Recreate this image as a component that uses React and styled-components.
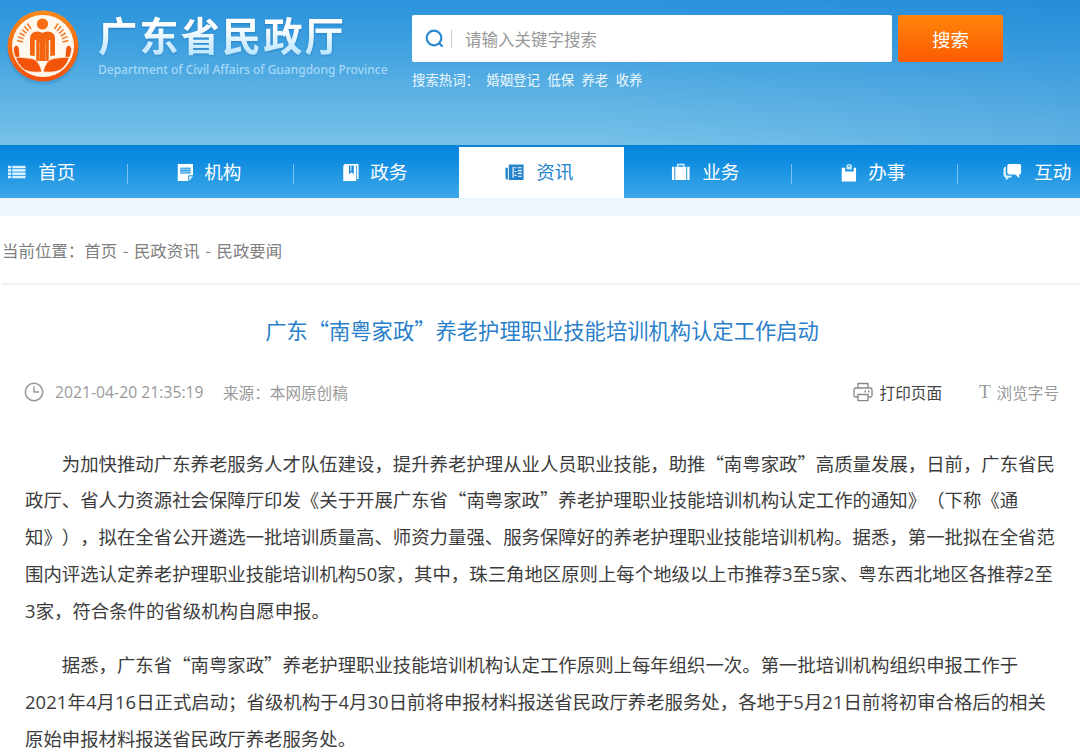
import React from 'react';
import styled, { createGlobalStyle, css } from 'styled-components';

const GlobalStyle = createGlobalStyle`
  * { box-sizing: border-box; }
  html, body { margin: 0; padding: 0; }
  body {
    width: 1080px;
    height: 753px;
    overflow: hidden;
    background: #fff;
    font-family: "Noto Sans CJK SC", sans-serif;
    text-spacing-trim: space-all;
    font-kerning: none;
  }
`;

const Page = styled.div`
  width: 1080px;
  height: 753px;
  overflow: hidden;
`;

const Header = styled.header`
  display: flex;
  height: 145px;
  background:
    linear-gradient(90deg, rgba(16, 120, 208, 0) 55%, rgba(16, 120, 208, 0.22) 100%),
    linear-gradient(180deg, #2b93dc 0%, #3c9fdf 28%, #5fb3e4 68%, #77c2e9 100%);
`;

const Brand = styled.div`
  display: flex;
  width: 412px;
  padding: 7px 0 0 4px;
`;

const Emblem = styled.svg`
  width: 78px;
  height: 80px;
  flex: none;
`;

const BrandText = styled.div`
  margin-left: 16px;
  padding-top: 1px;
  white-space: nowrap;
`;

const BrandName = styled.h1`
  margin: 0;
  height: 52px;
  font-size: 39.4px;
  letter-spacing: 1.9px;
  line-height: 52px;
  font-weight: 700;
  color: transparent;
  background: linear-gradient(180deg, #fff 35%, #b4e4ff 95%);
  background-clip: text;
  -webkit-background-clip: text;
  filter: drop-shadow(0 1px 1px rgba(20, 90, 160, 0.4));
`;

const BrandSub = styled.div`
  margin-top: 2px;
  font: 500 12px/16px "Noto Sans", sans-serif;
  letter-spacing: -0.01px;
  color: #a5d8f8;
`;

const SearchArea = styled.div`
  padding-top: 15px;
`;

const SearchRow = styled.div`
  display: flex;
  gap: 6px;
`;

const SearchBox = styled.div`
  display: flex;
  align-items: center;
  width: 480px;
  height: 47px;
  padding-left: 13px;
  border-radius: 2px;
  background: #fff;
`;

const SearchIcon = styled.svg`
  width: 19px;
  height: 19px;
`;

const Caret = styled.span`
  width: 1px;
  height: 18px;
  margin: 0 13px 0 7px;
  background: #c9c9c9;
`;

const Placeholder = styled.span`
  font-size: 16.5px;
  line-height: 24px;
  color: #999;
`;

const SearchButton = styled.button`
  width: 105px;
  height: 47px;
  padding: 0;
  border: 0;
  border-radius: 2px;
  background: linear-gradient(180deg, #ff850b, #fd5a02);
  color: #fff;
  font-family: inherit;
  font-size: 18.5px;
`;

const HotWords = styled.div`
  display: flex;
  gap: 7.4px;
  margin-top: 7px;
  font-size: 13.4px;
  line-height: 20px;
  color: #eef8ff;
`;

const Nav = styled.nav`
  display: flex;
  height: 53px;
  padding-top: 2px;
  overflow: hidden;
  background: linear-gradient(180deg, #0a80d2 0, #0788df 3px, #0f8ce0 30%, #3ea8e8 100%);
`;

const NavItem = styled.a`
  display: flex;
  flex: none;
  align-items: center;
  width: 166px;
  height: 51px;
  padding: 0 0 3px 46px;
  color: #fff;
  &:first-child { margin-left: -39px; }
  ${(p) => p.$active && css`
    width: 165px;
    margin-right: 1px;
    background: #fff;
    color: #2583cc;
  `}
`;

const NavIcon = styled.svg`
  width: 20px;
  height: 20px;
  margin-top: 2px;
  flex: none;
`;

const NavLabel = styled.span`
  margin-left: 11.2px;
  font-size: 18.6px;
  line-height: 26px;
  white-space: nowrap;
`;

const NavDivider = styled.span`
  width: 1px;
  height: 20px;
  margin: 6px -1px 0 auto;
  background: rgba(180, 225, 255, ${(p) => (p.$hidden ? 0 : 0.6)});
`;

const PaleStrip = styled.div`
  height: 18px;
  background: #eef6fd;
`;

const Breadcrumb = styled.div`
  display: flex;
  height: 69px;
  margin-left: 2px;
  border-bottom: 2px solid #f2f2f2;
  align-items: center;
  font-size: 16.45px;
  color: #808080;
`;

const Separator = styled.span`
  width: 16.8px;
  text-align: center;
`;

const Title = styled.h2`
  margin: 28px 0 0;
  padding-left: 4px;
  font-size: 21.3px;
  line-height: 34px;
  font-weight: 400;
  text-align: center;
  color: #2a7fca;
`;

const Meta = styled.div`
  display: flex;
  align-items: center;
  height: 30px;
  margin-top: 30px;
  padding: 0 21px 0 24px;
  font-size: 15.6px;
  color: #999;
`;

const MetaIcon = styled.svg`
  width: ${(p) => p.$size}px;
  height: ${(p) => p.$size}px;
  flex: none;
`;

const Time = styled.span`
  width: 168px;
  margin-left: 11px;
  font-family: "Open Sans", "Noto Sans", sans-serif;
  font-size: 15.7px;
  letter-spacing: 0.03px;
  white-space: nowrap;
`;

const Print = styled.span`
  display: flex;
  align-items: center;
  gap: 7px;
  margin-left: auto;
  color: #444;
`;

const FontSize = styled.span`
  display: flex;
  align-items: center;
  gap: 6px;
  margin-left: 37px;
`;

const SerifT = styled.span`
  font-family: "Liberation Serif", serif;
  font-size: 19px;
`;

const Article = styled.article`
  padding: 37.6px 0 0 25px;
  font-size: 18.4px;
  line-height: 36.8px;
  color: #3c3c3c;
`;

const Paragraph = styled.p`
  margin: 0 0 17.6px;
  text-indent: 2em;
`;

const Line = styled.span`
  display: block;
  height: 36.8px;
  white-space: nowrap;
  & + & { text-indent: 0; }
`;

const Num = styled.span`
  font-family: "Open Sans", "Noto Sans", sans-serif;
  line-height: 1;
  letter-spacing: 0.1px;
`;

const icons = {
  list: (
    <g fill="#d9f2ff">
      {[4, 7.5, 11, 14.5].map((y) => (
        <g key={y}>
          <rect x="0.5" y={y} width="3.5" height="2.6" />
          <rect x="5" y={y} width="14" height="2.6" />
        </g>
      ))}
    </g>
  ),
  note: (
    <g transform="translate(3 0)">
      <path fill="#fff" d="M1.5 2h16v12h-5v6h-11z" />
      <path fill="#d9f0ff" d="M13.5 15h4l-4 5z" />
      <path fill="#8fcbf3" d="M4 6h11v6H4z" />
      <path stroke="#2b98e3" strokeWidth="1" d="M4 6.5h11M4 9h11M4 11.5h11" />
    </g>
  ),
  book: (
    <g transform="translate(2.5 0)">
      <path fill="#fff" d="M3 2h14.5v16H16V4H4v1h11v15H1.5V4z" />
      <path fill="#fff" d="M2 4h13v16H2z" />
      <path fill="#168ce0" d="M7.5 4h5v9L10 10.500 7.5 13z" />
      <path fill="#fff" d="M9 4h1v5L9 10z" />
    </g>
  ),
  news: (
    <g>
      <path fill="#2583cc" d="M0 6h2.5v12.5H1L0 17zM3.500 2.500H19V19H3.500z" />
      <path stroke="#fff" strokeWidth="1.2" d="M8 5v11.500M9.500 6h2M13 6h4M13 9h4M13 12h4M13 15h4M9.500 10h2M9.500 14h2" />
    </g>
  ),
  bag: (
    <g fill="#fff">
      <path d="M0.500 5H3v14H0.500zM4 5h11.500v14H4zM16.500 5H19v14h-2.500z" />
      <path fill="none" stroke="#d9f0ff" strokeWidth="1.500" d="M6.500 5V2.700h6.500V5" />
    </g>
  ),
  clipboard: (
    <g transform="translate(2.500 0)">
      <path fill="#fff" d="M2 6h3.500v4h9V6h2.500v14.500H2z" />
      <path fill="#c6e8ff" d="M7 8V3.500a3 2.500 0 0 1 5.500 0V8z" />
      <circle cx="9.700" cy="4" r="0.900" fill="#2b98e3" />
    </g>
  ),
  chat: (
    <g fill="#fff" transform="translate(-1 0)">
      <path d="M7 2h10.500q2 0 2 2v7q0 2-2 2v4l-4-4H7q-2 0-2-2V4q0-2 2-2z" />
      <path fill="#d9f2ff" d="M3.500 5v7q0 2.500 2.500 2.500h5L8 16.500H6.500L3.500 19.500v-3Q1 16 1 14V8q0-3 2.500-3z" />
    </g>
  ),
};

const navItems = [
  { label: '首页', icon: 'list' },
  { label: '机构', icon: 'note' },
  { label: '政务', icon: 'book', plain: true },
  { label: '资讯', icon: 'news', active: true },
  { label: '业务', icon: 'bag' },
  { label: '办事', icon: 'clipboard' },
  { label: '互动', icon: 'chat', plain: true },
];

const rays = [
  [13, 33.5], [14, 29.6], [15.8, 26], [18, 22.5], [20.5, 19.300], [23.5, 16.500],
];

function Hand() {
  return (
    <>
      <path d="M9.500 43q-.2-4.500 3-4.500 2.500 0 2.700 3.500l.8 8.500h-4.500q-1.800-3-2-7.500z" />
      <path d="M11.500 50.500q4-.6 8 0l7 .8q5 .5 7.500 4.200 3 4 4 9.500-15 1.500-20.500-4.500-4-4-6-10z" />
    </>
  );
}

function Logo() {
  return (
    <Emblem viewBox="0 0 78 80">
      <defs>
        <linearGradient id="orange" x1="0" y1="0" x2="0" y2="1">
          <stop offset="0" stopColor="#f98a1c" />
          <stop offset="1" stopColor="#f4500a" />
        </linearGradient>
      </defs>
      <ellipse cx="39" cy="42" rx="36" ry="36" fill="#1d6dac" opacity="0.22" />
      <circle cx="39" cy="39" r="35.500" fill="url(#orange)" />
      <circle cx="39" cy="39" r="31" fill="#fff8ee" />
      <circle cx="38.500" cy="17" r="5.600" fill="#f56c12" />
      <path fill="#f5640f" d="M26 48.500V32q0-7.500 7.500-7.500 3 0 5 1.500 2-1.500 5-1.500 7.500 0 7.500 7.500v16.500q-3.500 0-5 .8V54H31v-4.700q-1.500-.8-5-.8z" />
      <path d="M31.500 54V33M45.500 54V33" stroke="#fff3e4" strokeWidth="1.500" />
      <path d="M35.500 54V35M41.500 54V35" stroke="#f9a066" strokeWidth="0.700" />
      <g fill="#f4540a" stroke="#fff8ee" strokeWidth="0.800">
        <Hand />
        <g transform="translate(77 0) scale(-1 1)"><Hand /></g>
      </g>
      <g stroke="#f47a20" strokeWidth="1.500">
        {rays.map(([x, y], i) => (
          <g key={x}>
            <path d={`M${x} ${y}l${6 - i * 0.5} ${1.5 + i * 0.8}`} />
            <path d={`M${77.5 - x} ${y}l${i * 0.5 - 6} ${1.5 + i * 0.8}`} />
          </g>
        ))}
      </g>
    </Emblem>
  );
}

export default function App() {
  return (
    <Page lang="zh-CN">
      <GlobalStyle />
      <Header>
        <Brand>
          <Logo />
          <BrandText>
            <BrandName>广东省民政厅</BrandName>
            <BrandSub>Department of Civil Affairs of Guangdong Province</BrandSub>
          </BrandText>
        </Brand>
        <SearchArea>
          <SearchRow>
            <SearchBox>
              <SearchIcon viewBox="0 0 19 19" fill="none" stroke="#2c8bd0" strokeWidth="2.200" strokeLinecap="round">
                <circle cx="9" cy="9" r="7.300" />
                <path d="M14 14l3 3" />
              </SearchIcon>
              <Caret />
              <Placeholder>请输入关键字搜索</Placeholder>
            </SearchBox>
            <SearchButton>搜索</SearchButton>
          </SearchRow>
          <HotWords>
            <span>搜索热词：</span>
            <span>婚姻登记</span>
            <span>低保</span>
            <span>养老</span>
            <span>收养</span>
          </HotWords>
        </SearchArea>
      </Header>
      <Nav>
        {navItems.map((item) => (
          <NavItem key={item.label} $active={item.active}>
            <NavIcon viewBox="0 0 20 21">{icons[item.icon]}</NavIcon>
            <NavLabel>{item.label}</NavLabel>
            <NavDivider $hidden={item.active || item.plain} />
          </NavItem>
        ))}
      </Nav>
      <PaleStrip />
      <Breadcrumb>
        <span>当前位置：</span>
        <span>首页</span>
        <Separator>-</Separator>
        <span>民政资讯</span>
        <Separator>-</Separator>
        <span>民政要闻</span>
      </Breadcrumb>
      <Title>广东“南粤家政”养老护理职业技能培训机构认定工作启动</Title>
      <Meta>
        <MetaIcon $size={20} viewBox="0 0 20 20" fill="none" stroke="#999" strokeWidth="1.500">
          <circle cx="10" cy="10" r="8.700" />
          <path d="M10 4.500V10h5" />
        </MetaIcon>
        <Time>2021-04-20 21:35:19</Time>
        <span>来源：本网原创稿</span>
        <Print>
          <MetaIcon $size={20} viewBox="0 0 20 20" fill="none" stroke="#888" strokeWidth="1.300">
            <path d="M5 6V1.500h10V6M5 15H2.500Q1 15 1 13.500V8q0-2 2-2h14q2 0 2 2v5.500q0 1.500-1.500 1.500H15M5 12.500h10v6.200H5z" />
            <path d="M11.500 9.500h1.500M15 9.500h1.500" strokeWidth="1.800" />
          </MetaIcon>
          <span>打印页面</span>
        </Print>
        <FontSize>
          <SerifT>T</SerifT>
          <span>浏览字号</span>
        </FontSize>
      </Meta>
      <Article>
        <Paragraph>
          <Line>为加快推动广东养老服务人才队伍建设，提升养老护理从业人员职业技能，助推“南粤家政”高质量发展，日前，广东省民</Line>
          <Line>政厅、省人力资源社会保障厅印发《关于开展广东省“南粤家政”养老护理职业技能培训机构认定工作的通知》（下称《通</Line>
          <Line>知》），拟在全省公开遴选一批培训质量高、师资力量强、服务保障好的养老护理职业技能培训机构。据悉，第一批拟在全省范</Line>
          <Line>围内评选认定养老护理职业技能培训机构<Num>50</Num>家，其中，珠三角地区原则上每个地级以上市推荐<Num>3</Num>至<Num>5</Num>家、粤东西北地区各推荐<Num>2</Num>至</Line>
          <Line><Num>3</Num>家，符合条件的省级机构自愿申报。</Line>
        </Paragraph>
        <Paragraph>
          <Line>据悉，广东省“南粤家政”养老护理职业技能培训机构认定工作原则上每年组织一次。第一批培训机构组织申报工作于</Line>
          <Line><Num>2021</Num>年<Num>4</Num>月<Num>16</Num>日正式启动；省级机构于<Num>4</Num>月<Num>30</Num>日前将申报材料报送省民政厅养老服务处，各地于<Num>5</Num>月<Num>21</Num>日前将初审合格后的相关</Line>
          <Line>原始申报材料报送省民政厅养老服务处。</Line>
        </Paragraph>
      </Article>
    </Page>
  );
}
